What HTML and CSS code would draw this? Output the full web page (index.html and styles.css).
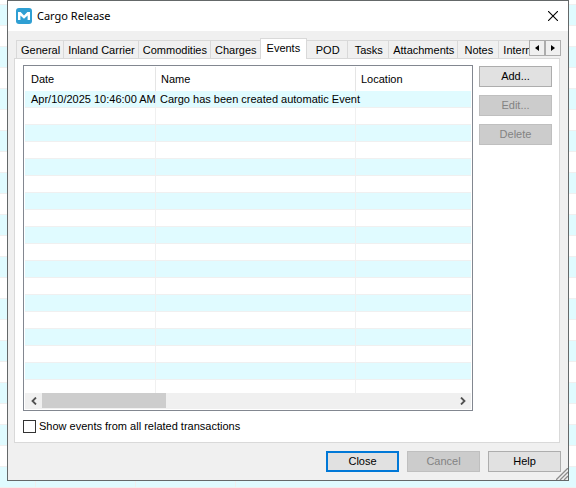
FILE: index.html
```html
<!DOCTYPE html>
<html lang="en">
<head>
<meta charset="utf-8">
<title>Cargo Release</title>
<link rel="stylesheet" href="styles.css">
</head>
<body>
<main class="window">
  <header class="titlebar">
    <svg class="logo" viewBox="0 0 16 16" aria-hidden="true"><rect width="16" height="16" rx="3" fill="#2f9fd3"/><path d="M2 12V4H4.600L8 7.400L11.400 4H14V12H11.600V7.400L8 10.800L4.400 7.400V12z" fill="#fff"/></svg>
    <h1 class="title">Cargo Release</h1>
    <button class="close" aria-label="Close window"><svg viewBox="0 0 10 10" width="10" height="10"><path d="M0 0L10 10M10 0L0 10" stroke="#000" stroke-width="1.1"/></svg></button>
  </header>
  <div class="content">
    <div class="tabbar">
      <div class="tabs" role="tablist">
        <button class="tab" role="tab">General</button>
        <button class="tab" role="tab">Inland Carrier</button>
        <button class="tab" role="tab">Commodities</button>
        <button class="tab" role="tab">Charges</button>
        <button class="tab selected" role="tab" aria-selected="true">Events</button>
        <button class="tab" role="tab">POD</button>
        <button class="tab" role="tab">Tasks</button>
        <button class="tab" role="tab">Attachments</button>
        <button class="tab" role="tab">Notes</button>
        <button class="tab" role="tab">Internal</button>
      </div>
      <div class="spinner">
        <button class="spin" aria-label="Previous tabs"><svg viewBox="0 0 4 6" width="4" height="6"><path d="M4 0V6L0 3z"/></svg></button>
        <button class="spin" aria-label="Next tabs"><svg viewBox="0 0 4 6" width="4" height="6"><path d="M0 0V6L4 3z"/></svg></button>
      </div>
    </div>
    <section class="panel">
      <div class="columns">
        <div class="list">
          <table class="events">
            <colgroup><col class="col-date"><col class="col-name"><col></colgroup>
            <thead><tr><th>Date</th><th>Name</th><th>Location</th></tr></thead>
            <tbody>
              <tr><td>Apr/10/2025 10:46:00 AM</td><td>Cargo has been created automatic Event</td><td></td></tr>
              <tr><td></td><td></td><td></td></tr>
              <tr><td></td><td></td><td></td></tr>
              <tr><td></td><td></td><td></td></tr>
              <tr><td></td><td></td><td></td></tr>
              <tr><td></td><td></td><td></td></tr>
              <tr><td></td><td></td><td></td></tr>
              <tr><td></td><td></td><td></td></tr>
              <tr><td></td><td></td><td></td></tr>
              <tr><td></td><td></td><td></td></tr>
              <tr><td></td><td></td><td></td></tr>
              <tr><td></td><td></td><td></td></tr>
              <tr><td></td><td></td><td></td></tr>
              <tr><td></td><td></td><td></td></tr>
              <tr><td></td><td></td><td></td></tr>
              <tr><td></td><td></td><td></td></tr>
              <tr><td></td><td></td><td></td></tr>
              <tr class="partial"><td></td><td></td><td></td></tr>
            </tbody>
          </table>
          <div class="scrollbar">
            <button class="arrow" aria-label="Scroll left"><svg viewBox="0 0 6 8" width="6" height="8"><path d="M5 0.5L1.5 4L5 7.5"/></svg></button>
            <div class="track"><div class="thumb"></div></div>
            <button class="arrow" aria-label="Scroll right"><svg viewBox="0 0 6 8" width="6" height="8"><path d="M1 0.5L4.5 4L1 7.5"/></svg></button>
          </div>
        </div>
        <div class="actions">
          <button class="button">Add...</button>
          <button class="button" disabled>Edit...</button>
          <button class="button" disabled>Delete</button>
        </div>
      </div>
      <label class="check"><input type="checkbox" class="box">Show events from all related transactions</label>
    </section>
    <footer class="footer">
      <button class="button primary">Close</button>
      <button class="button" disabled>Cancel</button>
      <button class="button">Help</button>
    </footer>
  </div>
  <svg class="grip" viewBox="0 0 12 12" aria-hidden="true"><path d="M0 12L12 0M4 12L12 4M8 12L12 8" stroke="#8c8c8c" stroke-width="1.3"/></svg>
</main>
</body>
</html>
```
FILE: styles.css
```css
* { box-sizing: border-box; }

html {
  min-height: 100%;
  background:
    repeating-linear-gradient(to right, transparent 0 35px, #f0f0f0 35px 36px, transparent 36px 100px) 0 481px / 300px 7px no-repeat,
    repeating-linear-gradient(#e0fbff 0 20px, #f0f0f0 20px 21px, #fff 21px 41px, #f0f0f0 41px 42px) 0 5px / 100% 42px;
}

body {
  margin: 0;
  padding: 0 7px;
  font: 11px/13px "Liberation Sans", Arial, sans-serif;
  color: #000;
}

button {
  margin: 0;
  padding: 0;
  border: 0;
  font: inherit;
  color: inherit;
}

.window {
  position: relative;
  border: 1px solid #646869;
  background: #f0f0f0;
}

.titlebar {
  display: flex;
  align-items: center;
  gap: 5px;
  height: 30px;
  padding: 0 10px 0 8px;
  background: #fff;
}
.logo { width: 16px; height: 16px; }
.title {
  flex: 1;
  margin: 0;
  font: 11px/16px "Noto Sans", "Open Sans", sans-serif;
}
.close {
  display: flex;
  background: none;
}

.content { padding: 7px 7px 8px 6px; }

.tabbar {
  position: relative;
  display: flex;
  height: 21px;
  margin-bottom: -1px;
  padding-left: 2px;
}
.tabs {
  display: flex;
  flex: 1;
  min-width: 0;
  align-items: flex-start;
  overflow: hidden;
}
.tab {
  flex: none;
  min-width: 41px;
  height: 18px;
  margin-top: 2px;
  padding: 2px 3px 0 4px;
  border: solid #d9d9d9;
  border-width: 1px 1px 0 0;
  background: #f0f0f0;
  text-align: center;
  white-space: nowrap;
}
.tab:first-child { border-left-width: 1px; }
.tab.selected {
  height: 21px;
  margin: 0 0 0 -1px;
  padding: 0 6px 1px;
  border-left-width: 1px;
  background: #fff;
}
.spinner {
  display: flex;
  height: 16px;
  margin-top: 2px;
}
.spin {
  display: flex;
  align-items: center;
  justify-content: center;
  width: 16px;
  border: 1px solid #adadad;
  background: #f0f0f0;
}

.panel {
  margin-right: 1px;
  padding: 6px 7px 9px 8px;
  border: 1px solid #d9d9d9;
  background: #fff;
}
.columns {
  display: flex;
  gap: 6px;
}
.list {
  flex: 1;
  min-width: 0;
  padding: 1px;
  border: 1px solid #828790;
}

.events {
  width: 100%;
  table-layout: fixed;
  border-collapse: separate;
  border-spacing: 0;
}
.col-date { width: 131px; }
.col-name { width: 200px; }
.events th {
  height: 24px;
  padding: 0 5px;
  border-right: 1px solid #e5e5e5;
  font-weight: normal;
  text-align: left;
}
.events th:first-child { padding-left: 6px; }
.events td {
  height: 17px;
  padding: 0 0 0 6px;
  border: solid #f0f0f0;
  border-width: 0 1px 1px 0;
  white-space: nowrap;
}
.events td + td { padding-left: 4px; }
.events th:last-child,
.events td:last-child { border-right: 0; }
.events tbody tr:nth-child(odd) { background: #e0fbff; }
.events .partial td {
  height: 13px;
  border-bottom: 0;
}

.scrollbar {
  display: flex;
  height: 16px;
  background: #f0f0f0;
}
.arrow {
  display: flex;
  align-items: center;
  justify-content: center;
  width: 17px;
  background: none;
}
.arrow path {
  fill: none;
  stroke: #505050;
  stroke-width: 1.8;
}
.track { flex: 1; }
.thumb {
  width: 30%;
  height: 15px;
  background: #cdcdcd;
}

.actions {
  display: flex;
  flex-direction: column;
  gap: 8px;
  padding-top: 1px;
}
.button {
  width: 73px;
  height: 21px;
  border: 1px solid #adadad;
  background: #e1e1e1;
}
.button:disabled {
  border-color: #bfbfbf;
  background: #ccc;
  color: #838383;
}
.button.primary { border: 2px solid #0078d7; }

.check {
  display: flex;
  align-items: center;
  gap: 3px;
  margin-top: 9px;
}
.box {
  appearance: none;
  width: 13px;
  height: 13px;
  margin: 0;
  border: 1px solid #333;
  background: #fff;
}

.footer {
  display: flex;
  justify-content: flex-end;
  gap: 8px;
  margin-top: 8px;
}

.grip {
  position: absolute;
  right: 0;
  bottom: 0;
  width: 12px;
  height: 12px;
}
```
